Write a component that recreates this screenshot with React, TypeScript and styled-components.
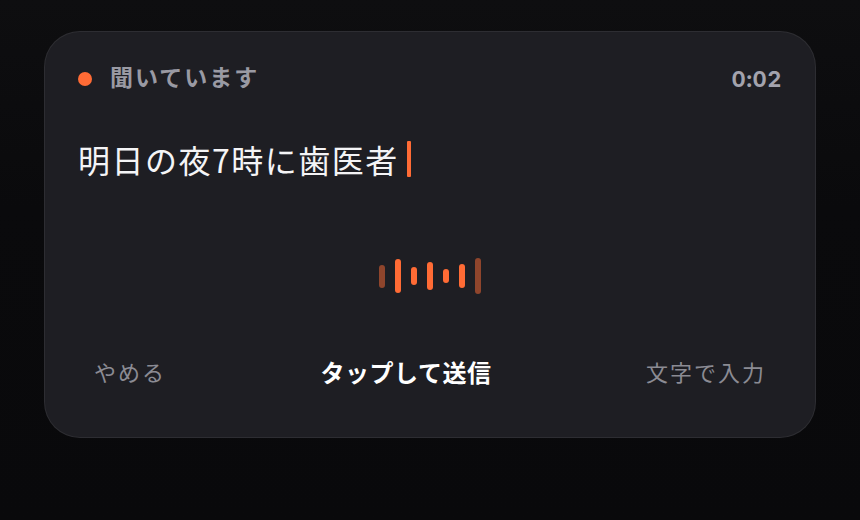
import React from "react";
import styled, { createGlobalStyle } from "styled-components";

const GlobalStyle = createGlobalStyle`
  html, body {
    margin: 0;
    padding: 0;
    background: #0a0a0c;
  }
  body {
    font-family: "Noto Sans CJK JP", "Noto Sans", sans-serif;
    -webkit-font-smoothing: antialiased;
  }
`;

const Page = styled.div`
  width: 860px;
  height: 520px;
  box-sizing: border-box;
  padding: 31px 44px 0 44px;
  background: linear-gradient(180deg, #0e0e10 0%, #0a0a0c 40%, #09090b 100%);
`;

const Card = styled.div`
  width: 772px;
  height: 407px;
  box-sizing: border-box;
  border-radius: 36px;
  background: #1e1e23;
  border: 1px solid rgba(255, 255, 255, 0.07);
  padding: 31px 33px 47px 33px;
  display: flex;
  flex-direction: column;
`;

const Header = styled.div`
  display: flex;
  align-items: center;
  justify-content: space-between;
  height: 32px;
`;

const Status = styled.div`
  display: flex;
  align-items: center;
  gap: 18px;
`;

const Dot = styled.span`
  width: 14px;
  height: 14px;
  border-radius: 50%;
  background: #ff6b35;
  flex: none;
`;

const StatusLabel = styled.span`
  font-size: 23px;
  line-height: 1;
  font-weight: 700;
  color: #9a9aa3;
  letter-spacing: 2px;
  margin-bottom: 6px;
`;

const Timer = styled.span`
  font-family: Inter, "Liberation Sans", sans-serif;
  font-size: 22px;
  font-weight: 700;
  color: #a3a3ad;
  letter-spacing: 0.5px;
  font-variant-numeric: tabular-nums;
`;

const Transcript = styled.div`
  margin-top: 44px;
  height: 40px;
  display: flex;
  align-items: center;
  font-size: 32px;
  line-height: 40px;
  color: #f4f4f6;
  letter-spacing: 1.5px;
`;

const Caret = styled.span`
  display: inline-block;
  width: 4px;
  height: 36px;
  margin-left: 8px;
  border-radius: 1px;
  background: #ff6b35;
`;

const Wave = styled.div`
  margin-top: 77px;
  height: 40px;
  display: flex;
  align-items: center;
  justify-content: center;
  gap: 10px;
`;

const Bar = styled.span<{ $h: number; $dim?: boolean }>`
  width: 6px;
  height: ${(p) => p.$h}px;
  border-radius: 3px;
  background: #ff6b35;
  opacity: ${(p) => (p.$dim ? 0.5 : 1)};
`;

const Actions = styled.div`
  margin-top: 58px;
  display: flex;
  align-items: center;
  justify-content: space-between;
`;

const ActionButton = styled.button<{ $primary?: boolean }>`
  appearance: none;
  border: none;
  background: transparent;
  padding: 0 16px;
  height: 34px;
  font-family: "Noto Sans CJK JP", "Noto Sans", sans-serif;
  font-size: ${(p) => (p.$primary ? 24 : 22)}px;
  font-weight: ${(p) => (p.$primary ? 700 : 400)};
  color: ${(p) => (p.$primary ? "#ffffff" : "#8b8b93")};
  letter-spacing: ${(p) => (p.$primary ? 0.5 : 2)}px;
  cursor: pointer;
`;

const bars: { h: number; dim?: boolean }[] = [
  { h: 23, dim: true },
  { h: 34 },
  { h: 18 },
  { h: 28 },
  { h: 14 },
  { h: 24 },
  { h: 36, dim: true },
];

export default function App() {
  return (
    <>
      <GlobalStyle />
      <Page>
        <Card>
          <Header>
            <Status>
              <Dot />
              <StatusLabel>聞いています</StatusLabel>
            </Status>
            <Timer>0:02</Timer>
          </Header>
          <Transcript>
            明日の夜7時に歯医者
            <Caret />
          </Transcript>
          <Wave>
            {bars.map((b, i) => (
              <Bar key={i} $h={b.h} $dim={b.dim} />
            ))}
          </Wave>
          <Actions>
            <ActionButton>やめる</ActionButton>
            <ActionButton $primary>タップして送信</ActionButton>
            <ActionButton>文字で入力</ActionButton>
          </Actions>
        </Card>
      </Page>
    </>
  );
}
